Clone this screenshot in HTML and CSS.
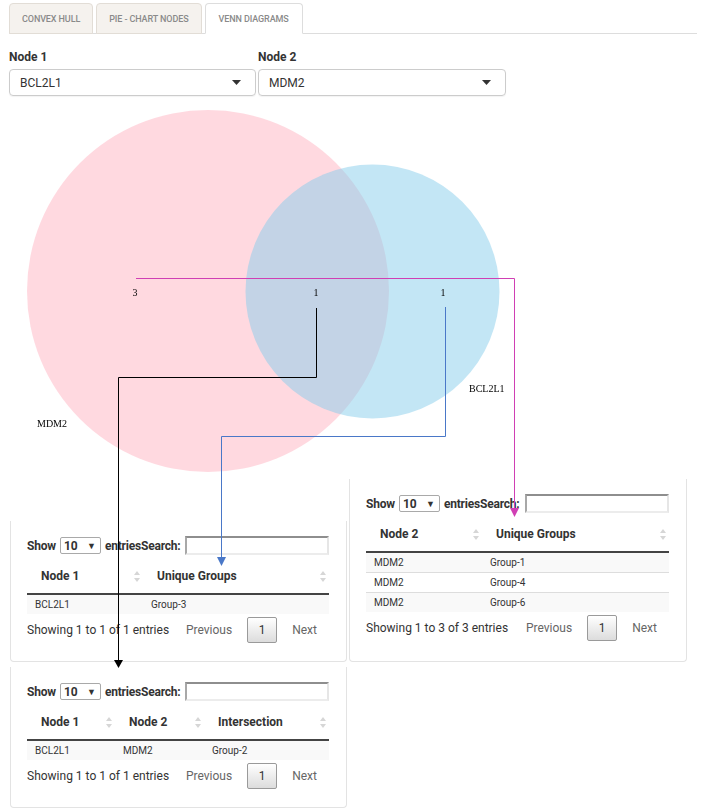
FILE: index.html
```html
<!DOCTYPE html>
<html>
<head>
<meta charset="utf-8">
<link rel="stylesheet" href="styles.css">
</head>
<body>
<div class="page">
  <ul class="tabs">
    <li class="tab">CONVEX HULL</li>
    <li class="tab">PIE - CHART NODES</li>
    <li class="tab active">VENN DIAGRAMS</li>
  </ul>

  <div class="selectors">
    <div class="field">
      <div class="label">Node 1</div>
      <div class="select">BCL2L1<svg class="caret" width="9" height="5" viewBox="0 0 9 5"><polygon points="0,0 9,0 4.5,5"/></svg></div>
    </div>
    <div class="field field2">
      <div class="label">Node 2</div>
      <div class="select">MDM2<svg class="caret" width="9" height="5" viewBox="0 0 9 5"><polygon points="0,0 9,0 4.5,5"/></svg></div>
    </div>
  </div>

  <svg class="venn" width="688" height="380" viewBox="0 0 688 380">
    <circle cx="199" cy="192" r="181" fill="rgb(255,192,203)" fill-opacity="0.6"/>
    <circle cx="363.5" cy="192.5" r="127" fill="rgb(135,206,235)" fill-opacity="0.5"/>
    <g class="vtext">
      <text x="126" y="197" text-anchor="middle">3</text>
      <text x="307" y="197" text-anchor="middle">1</text>
      <text x="434" y="197" text-anchor="middle">1</text>
      <text x="460" y="293">BCL2L1</text>
      <text x="28" y="328">MDM2</text>
    </g>
  </svg>

  <div class="tables">
    <div class="col col-left">
      <div class="panel">
        <div class="controls">
          <span class="ctl">Show</span>
          <span class="len">10<span class="tri">▼</span></span>
          <span class="ctl">entries</span><span class="ctl">Search:</span>
          <span class="search"></span>
        </div>
        <table class="dt">
          <colgroup><col style="width:116px"><col></colgroup>
          <thead><tr>
            <th><div class="thc">Node 1<svg class="sort" width="6" height="11" viewBox="0 0 6 11"><polygon points="0,4 3,0 6,4"/><polygon points="0,7 3,11 6,7"/></svg></div></th>
            <th><div class="thc">Unique Groups<svg class="sort" width="6" height="11" viewBox="0 0 6 11"><polygon points="0,4 3,0 6,4"/><polygon points="0,7 3,11 6,7"/></svg></div></th>
          </tr></thead>
          <tbody>
            <tr class="odd"><td>BCL2L1</td><td>Group-3</td></tr>
          </tbody>
        </table>
        <div class="footer">
          <span class="info">Showing 1 to 1 of 1 entries</span>
          <div class="pager">
            <span class="pnav prev">Previous</span>
            <span class="pbtn">1</span>
            <span class="pnav next">Next</span>
          </div>
        </div>
      </div>

      <div class="panel p3">
        <div class="controls">
          <span class="ctl">Show</span>
          <span class="len">10<span class="tri">▼</span></span>
          <span class="ctl">entries</span><span class="ctl">Search:</span>
          <span class="search"></span>
        </div>
        <table class="dt">
          <colgroup><col style="width:88px"><col style="width:89px"><col></colgroup>
          <thead><tr>
            <th><div class="thc">Node 1<svg class="sort" width="6" height="11" viewBox="0 0 6 11"><polygon points="0,4 3,0 6,4"/><polygon points="0,7 3,11 6,7"/></svg></div></th>
            <th><div class="thc">Node 2<svg class="sort" width="6" height="11" viewBox="0 0 6 11"><polygon points="0,4 3,0 6,4"/><polygon points="0,7 3,11 6,7"/></svg></div></th>
            <th><div class="thc">Intersection<svg class="sort" width="6" height="11" viewBox="0 0 6 11"><polygon points="0,4 3,0 6,4"/><polygon points="0,7 3,11 6,7"/></svg></div></th>
          </tr></thead>
          <tbody>
            <tr class="odd"><td>BCL2L1</td><td>MDM2</td><td>Group-2</td></tr>
          </tbody>
        </table>
        <div class="footer">
          <span class="info">Showing 1 to 1 of 1 entries</span>
          <div class="pager">
            <span class="pnav prev">Previous</span>
            <span class="pbtn">1</span>
            <span class="pnav next">Next</span>
          </div>
        </div>
      </div>
    </div>

    <div class="col col-right">
      <div class="panel p2">
        <div class="controls">
          <span class="ctl">Show</span>
          <span class="len">10<span class="tri">▼</span></span>
          <span class="ctl">entries</span><span class="ctl">Search:</span>
          <span class="search"></span>
        </div>
        <table class="dt">
          <colgroup><col style="width:116px"><col></colgroup>
          <thead><tr>
            <th><div class="thc">Node 2<svg class="sort" width="6" height="11" viewBox="0 0 6 11"><polygon points="0,4 3,0 6,4"/><polygon points="0,7 3,11 6,7"/></svg></div></th>
            <th><div class="thc">Unique Groups<svg class="sort" width="6" height="11" viewBox="0 0 6 11"><polygon points="0,4 3,0 6,4"/><polygon points="0,7 3,11 6,7"/></svg></div></th>
          </tr></thead>
          <tbody>
            <tr class="odd"><td>MDM2</td><td>Group-1</td></tr>
            <tr class="even"><td>MDM2</td><td>Group-4</td></tr>
            <tr class="odd"><td>MDM2</td><td>Group-6</td></tr>
          </tbody>
        </table>
        <div class="footer">
          <span class="info">Showing 1 to 3 of 3 entries</span>
          <div class="pager">
            <span class="pnav prev">Previous</span>
            <span class="pbtn">1</span>
            <span class="pnav next">Next</span>
          </div>
        </div>
      </div>
    </div>
  </div>

  <svg class="arrows" width="705" height="810" viewBox="0 0 705 810">
    <path d="M136 278.5 H514.5 V509" stroke="#d03fb4" fill="none"/>
    <polygon points="510,508 519,508 514.5,517" fill="#d03fb4"/>
    <path d="M316.5 308 V377.5 H118.5 V661" stroke="#000" fill="none"/>
    <polygon points="114,660 123,660 118.5,668" fill="#000"/>
    <path d="M445.5 307 V436.5 H221.5 V558" stroke="#4a78c8" fill="none"/>
    <polygon points="217,557 226,557 221.5,566" fill="#4a78c8"/>
  </svg>
</div>
</body>
</html>
```

FILE: styles.css
```css
* { box-sizing: border-box; }

html, body {
  margin: 0;
  padding: 0;
  background: #fff;
}

body {
  font-family: Roboto, "Liberation Sans", Arial, sans-serif;
  color: #333;
  font-size: 12px;
}

.page {
  position: relative;
  width: 705px;
  height: 810px;
  padding: 0 8px 0 9px;
  overflow: hidden;
}

/* tabs */
.tabs {
  list-style: none;
  margin: 0;
  padding: 3px 0 0 0;
  display: flex;
  gap: 3px;
  border-bottom: 1px solid #ddd;
}

.tab {
  height: 31px;
  margin-bottom: -1px;
  padding: 0 12px;
  display: flex;
  align-items: center;
  font-size: 9px;
  font-weight: 500;
  color: #8a8a8a;
  background: #f5f2ee;
  border: 1px solid #e2ddd6;
  border-radius: 4px 4px 0 0;
  letter-spacing: -0.1px;
}

.tab.active {
  background: #fff;
  border-color: #ddd;
  border-bottom-color: #fff;
  padding: 0 13px;
}

/* selectors */
.selectors {
  display: flex;
  gap: 2px;
  margin-top: 16px;
}

.field {
  width: 247px;
}

.field2 {
  width: 248px;
}

.label {
  font-weight: 700;
  font-size: 12px;
  line-height: 14px;
  color: #333;
  margin-bottom: 5px;
}

.select {
  height: 27px;
  border: 1px solid #ccc;
  border-radius: 4px;
  padding: 0 14px 0 10px;
  display: flex;
  align-items: center;
  justify-content: space-between;
  font-size: 12px;
  color: #333;
  box-shadow: 0 1px 1px rgba(0,0,0,0.05);
}

.caret { fill: #333; }

/* venn */
.venn {
  display: block;
  margin-top: 3px;
  will-change: transform;
}

.vtext text {
  font-family: "Liberation Serif", "Times New Roman", serif;
  font-size: 10px;
  fill: #000;
}

/* tables */
.tables {
  display: flex;
  gap: 2px;
  margin-left: 1px;
  align-items: flex-start;
}

.col-left {
  width: 337px;
  padding-top: 42px;
}

.col-right {
  width: 338px;
}

.panel {
  border: 1px solid #e3e3e3;
  border-top: none;
  border-radius: 0 0 4px 4px;
  padding: 15px 17px 18px 16px;
}

.p2 {
  padding-bottom: 20px;
}

.p3 {
  margin-top: 5px;
}

.controls {
  display: flex;
  align-items: center;
  height: 19px;
}

.ctl {
  font-weight: 700;
  font-size: 12px;
  color: #333;
  letter-spacing: -0.2px;
}

.len {
  width: 41px;
  height: 17px;
  margin: 0 4px;
  border: 1px solid #a9a9a9;
  border-radius: 2px;
  display: flex;
  align-items: center;
  justify-content: space-between;
  padding: 0 4px 0 3px;
  font-weight: 700;
  font-size: 12px;
  color: #333;
}

.tri {
  font-size: 9px;
  color: #333;
}

.search {
  width: 144px;
  height: 19px;
  margin-left: auto;
  border-top: 2px solid #8e8e8e;
  border-left: 2px solid #a8a8a8;
  border-right: 2px solid #e6e6e6;
  border-bottom: 2px solid #ececec;
}

.dt {
  width: 100%;
  margin-top: 4px;
  border-collapse: collapse;
  table-layout: fixed;
}

.dt th {
  padding: 10px 3px 10px 14px;
  line-height: 14px;
  font-weight: 700;
  font-size: 12px;
  color: #333;
  text-align: left;
  border-bottom: 2px solid #444;
}

.thc {
  display: flex;
  align-items: center;
  justify-content: space-between;
}

.sort { fill: #d6d6d6; }

.dt td {
  padding: 4px 8px;
  line-height: 11px;
  font-size: 10px;
  color: #333;
}

.dt tr.odd td { background: #f9f9f9; }

.dt tbody tr + tr td { border-top: 1px solid #ddd; }

.footer {
  display: flex;
  align-items: center;
  margin-top: 3px;
  height: 26px;
}

.info {
  font-size: 12px;
  color: #333;
}

.pager {
  margin-left: auto;
  display: flex;
  align-items: center;
}

.pnav {
  font-size: 12px;
  color: #666;
}

.prev { margin-right: 15px; }
.next { margin-left: 15px; margin-right: 12px; }

.pbtn {
  width: 30px;
  height: 26px;
  display: flex;
  align-items: center;
  justify-content: center;
  font-size: 12px;
  color: #333;
  border: 1px solid #9a9a9a;
  border-radius: 2px;
  background: linear-gradient(#fff, #dcdcdc);
}

/* overlay arrows */
.arrows {
  position: absolute;
  top: 0;
  left: 0;
  pointer-events: none;
}
```
